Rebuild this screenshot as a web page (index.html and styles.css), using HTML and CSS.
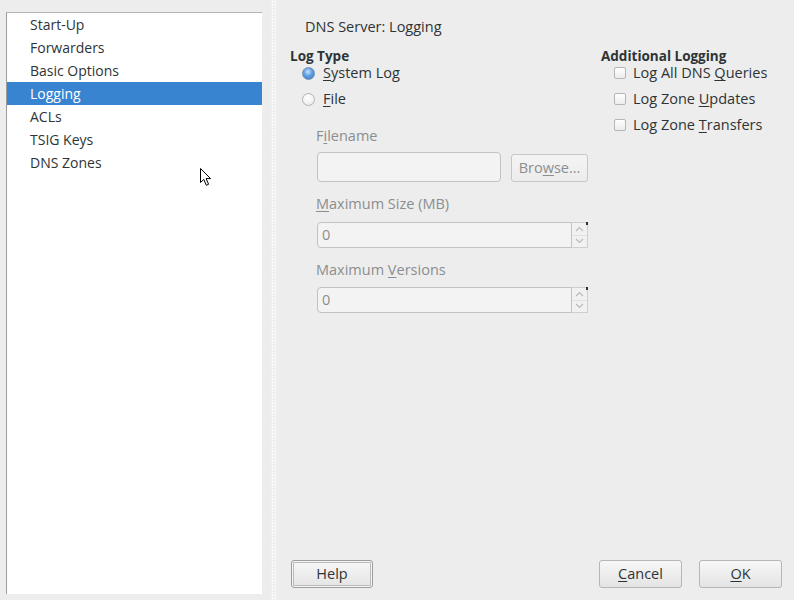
FILE: index.html
```html
<!DOCTYPE html>
<html>
<head>
<meta charset="utf-8">
<link rel="stylesheet" href="styles.css">
</head>
<body>
<div class="window">
  <div class="sidebar">
    <ul class="nav">
      <li>Start-Up</li>
      <li>Forwarders</li>
      <li>Basic Options</li>
      <li class="selected">Logging</li>
      <li>ACLs</li>
      <li>TSIG Keys</li>
      <li>DNS Zones</li>
    </ul>
  </div>
  <div class="handle"></div>
  <div class="content">
    <div class="title">DNS Server: Logging</div>
    <div class="columns">
      <div class="col-log">
        <div class="heading">Log Type</div>
        <div class="options">
          <div class="option"><span class="radio checked"></span><span><u>S</u>ystem Log</span></div>
          <div class="option"><span class="radio"></span><span><u>F</u>ile</span></div>
        </div>
        <div class="file-fields">
          <div class="field-label">F<u>i</u>lename</div>
          <div class="file-row">
            <div class="entry file-entry"></div>
            <div class="btn btn-browse">Bro<u>w</u>se...</div>
          </div>
          <div class="field-label label-gap"><u>M</u>aximum Size (MB)</div>
          <div class="spin spin-first">
            <div class="entry spin-entry">0</div>
            <div class="spin-btns">
              <div class="spin-half"><svg width="9" height="6" viewBox="0 0 9 6"><path d="M1 5 L4.5 1.5 L8 5" fill="none" stroke="#b9bcbc" stroke-width="1.2"/></svg></div>
              <div class="spin-half"><svg width="9" height="6" viewBox="0 0 9 6"><path d="M1 1 L4.5 4.5 L8 1" fill="none" stroke="#b9bcbc" stroke-width="1.2"/></svg></div>
            </div>
          </div>
          <div class="field-label label-gap">Maximum <u>V</u>ersions</div>
          <div class="spin spin-second">
            <div class="entry spin-entry">0</div>
            <div class="spin-btns">
              <div class="spin-half"><svg width="9" height="6" viewBox="0 0 9 6"><path d="M1 5 L4.5 1.5 L8 5" fill="none" stroke="#b9bcbc" stroke-width="1.2"/></svg></div>
              <div class="spin-half"><svg width="9" height="6" viewBox="0 0 9 6"><path d="M1 1 L4.5 4.5 L8 1" fill="none" stroke="#b9bcbc" stroke-width="1.2"/></svg></div>
            </div>
          </div>
        </div>
      </div>
      <div class="col-add">
        <div class="heading">Additional Logging</div>
        <div class="options">
          <div class="option"><span class="check"></span><span>Log All DNS <u>Q</u>ueries</span></div>
          <div class="option"><span class="check"></span><span>Log Zone <u>U</u>pdates</span></div>
          <div class="option"><span class="check"></span><span>Log Zone <u>T</u>ransfers</span></div>
        </div>
      </div>
    </div>
    <div class="buttons">
      <div class="btn btn-help">Help</div>
      <div class="spacer"></div>
      <div class="btn btn-cancel"><u>C</u>ancel</div>
      <div class="btn btn-ok"><u>O</u>K</div>
    </div>
  </div>
  <svg class="cursor" width="13" height="19" viewBox="0 0 13 19">
    <path d="M0.5 0.5 L0.5 14.5 L3.8 11.4 L6.3 17.3 L8.6 16.3 L6.1 10.6 L10.6 10.6 Z" fill="#fff" stroke="#000" stroke-width="1" stroke-linejoin="miter"/>
  </svg>
</div>
</body>
</html>
```

FILE: styles.css
```css
* {
  box-sizing: border-box;
}

html, body {
  margin: 0;
  padding: 0;
}

body {
  background: #ededed;
  font-family: "Open Sans", "DejaVu Sans", sans-serif;
  font-size: 14px;
  color: #2e3436;
}

u {
  text-decoration: underline;
  text-underline-offset: 2px;
}

.window {
  position: relative;
  display: flex;
  width: 794px;
  height: 600px;
  overflow: hidden;
}

.sidebar {
  margin: 12px 0 6px 6px;
  width: 256px;
  height: 582px;
  background: #ffffff;
  border-left: 1px solid #9c9c9c;
  border-top: 1px solid #b4b4b4;
}

.nav {
  list-style: none;
  margin: 0;
  padding: 0;
}

.nav li {
  height: 23px;
  line-height: 23px;
  padding-left: 23px;
}

.nav li.selected {
  background: #3884d0;
  color: #ffffff;
}

.handle {
  margin-left: 9px;
  width: 5px;
  background-image: radial-gradient(circle at center, #fdfdfd 0.8px, rgba(255,255,255,0) 1.2px);
  background-size: 3px 3px;
  background-position: 0 0;
}

.content {
  flex: 1;
  display: flex;
  flex-direction: column;
  padding: 17px 12px 12px 14px;
  font-size: 14.5px;
}

.title {
  margin-left: 15px;
  line-height: 20px;
}

.columns {
  display: flex;
  margin-top: 13px;
}

.col-log {
  width: 311px;
}

.heading {
  font-weight: bold;
  font-size: 13.5px;
  line-height: 12px;
}

.options {
  display: flex;
  flex-direction: column;
  gap: 4px;
}

.option {
  display: flex;
  align-items: center;
  height: 22px;
  line-height: 22px;
}

.col-log .option {
  padding-left: 12px;
  gap: 8px;
}

.col-add .option {
  padding-left: 13px;
  gap: 7px;
}

.radio {
  width: 13px;
  height: 13px;
  border-radius: 50%;
  border: 1px solid #b3b3b3;
  background: radial-gradient(circle at 45% 35%, #ffffff 0%, #f3f3f3 50%, #e2e2e2 100%);
  flex: none;
}

.radio.checked {
  border-color: #7391b6;
  background: radial-gradient(circle at 45% 35%, #c9e2fb 0%, #5d9ee0 45%, #3576c4 100%);
}

.check {
  width: 12px;
  height: 12px;
  border: 1px solid #b5b5b5;
  border-radius: 2px;
  background: linear-gradient(#ffffff, #ececec);
  flex: none;
}

.file-fields {
  padding-left: 26px;
  margin-top: 16px;
  color: #8b8e8f;
}

.field-label {
  line-height: 20px;
}

.label-gap {
  margin-top: 12px;
}

.file-row {
  display: flex;
  align-items: flex-start;
  gap: 10px;
  margin-top: 6px;
  margin-left: 1px;
}

.entry {
  background: #f3f3f3;
  border: 1px solid #c2c2bf;
  border-radius: 4px;
}

.file-entry {
  width: 184px;
  height: 30px;
}

.btn {
  border: 1px solid #b6b6b3;
  border-radius: 3px;
  background: linear-gradient(#f7f7f7, #e4e4e4);
  text-align: center;
  line-height: 26px;
  height: 28px;
}

.btn-browse {
  margin-top: 2px;
  width: 77px;
  color: #8b8e8f;
  background: linear-gradient(#f4f4f4, #ececec);
  border-color: #c6c6c3;
}

.spin {
  display: flex;
  margin-left: 1px;
  height: 26px;
  width: 271px;
}

.spin-first {
  margin-top: 8px;
}

.spin-second {
  margin-top: 7px;
}

.spin-entry {
  width: 255px;
  height: 26px;
  line-height: 24px;
  padding-left: 4px;
  border-radius: 4px 0 0 4px;
}

.spin-btns {
  position: relative;
  width: 16px;
  height: 26px;
  display: flex;
  flex-direction: column;
  border: 1px solid #cfcfcc;
  border-left: none;
  background: #f1f1f1;
}

.spin-btns::after {
  content: "";
  position: absolute;
  right: -1px;
  top: -1px;
  width: 2px;
  height: 3px;
  background: #2e3436;
}

.spin-half {
  flex: 1;
  display: flex;
  align-items: center;
  justify-content: center;
}

.spin-half + .spin-half {
  border-top: 1px solid #e2e2e0;
}

.buttons {
  margin-top: auto;
  display: flex;
  align-items: flex-end;
}

.btn-help {
  margin-left: 1px;
  width: 82px;
  border-color: #9d9d9d;
  box-shadow: inset 0 0 0 1px #f6f6f6, inset 0 0 0 2px #bababa;
}

.spacer {
  flex: 1;
}

.btn-cancel {
  width: 83px;
  margin-right: 17px;
}

.btn-ok {
  width: 83px;
}

.cursor {
  position: absolute;
  left: 200px;
  top: 168px;
}
```
